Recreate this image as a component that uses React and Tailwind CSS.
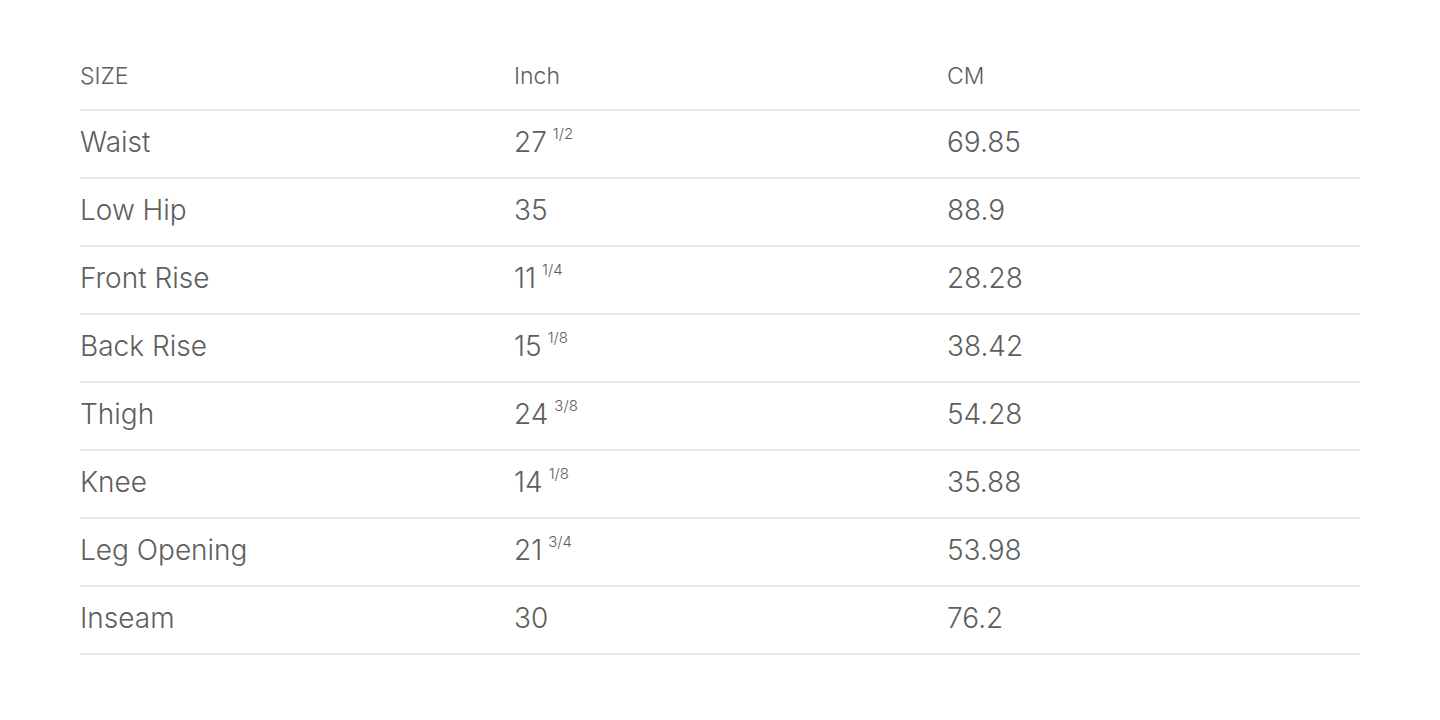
import React from "react";

const rows = [
  ["Waist", "27", "1/2", "69.85"],
  ["Low Hip", "35", "", "88.9"],
  ["Front Rise", "11", "1/4", "28.28"],
  ["Back Rise", "15", "1/8", "38.42"],
  ["Thigh", "24", "3/8", "54.28"],
  ["Knee", "14", "1/8", "35.88"],
  ["Leg Opening", "21", "3/4", "53.98"],
  ["Inseam", "30", "", "76.2"],
];

export default function App() {
  return (
    <div className="min-h-screen bg-white px-[80px] pt-[43px] text-[#5e5e5e] font-light" style={{ fontFamily: "Inter, 'Liberation Sans', sans-serif" }}>
      <div className="grid grid-cols-[434px_433px_1fr] h-[68px] items-center border-b-2 border-[#e6e6e6] text-[23px]">
        <div>SIZE</div>
        <div>Inch</div>
        <div>CM</div>
      </div>
      {rows.map(([name, whole, frac, cm]) => (
        <div key={name} className="grid grid-cols-[434px_433px_1fr] h-[68px] items-center border-b-2 border-[#e6e6e6] text-[28px] pb-[4px]">
          <div>{name}</div>
          <div className="flex items-start">
            <span>{whole}</span>
            {frac && <span className="ml-[6px] mt-[5px] text-[15px] leading-none">{frac}</span>}
          </div>
          <div>{cm}</div>
        </div>
      ))}
    </div>
  );
}
